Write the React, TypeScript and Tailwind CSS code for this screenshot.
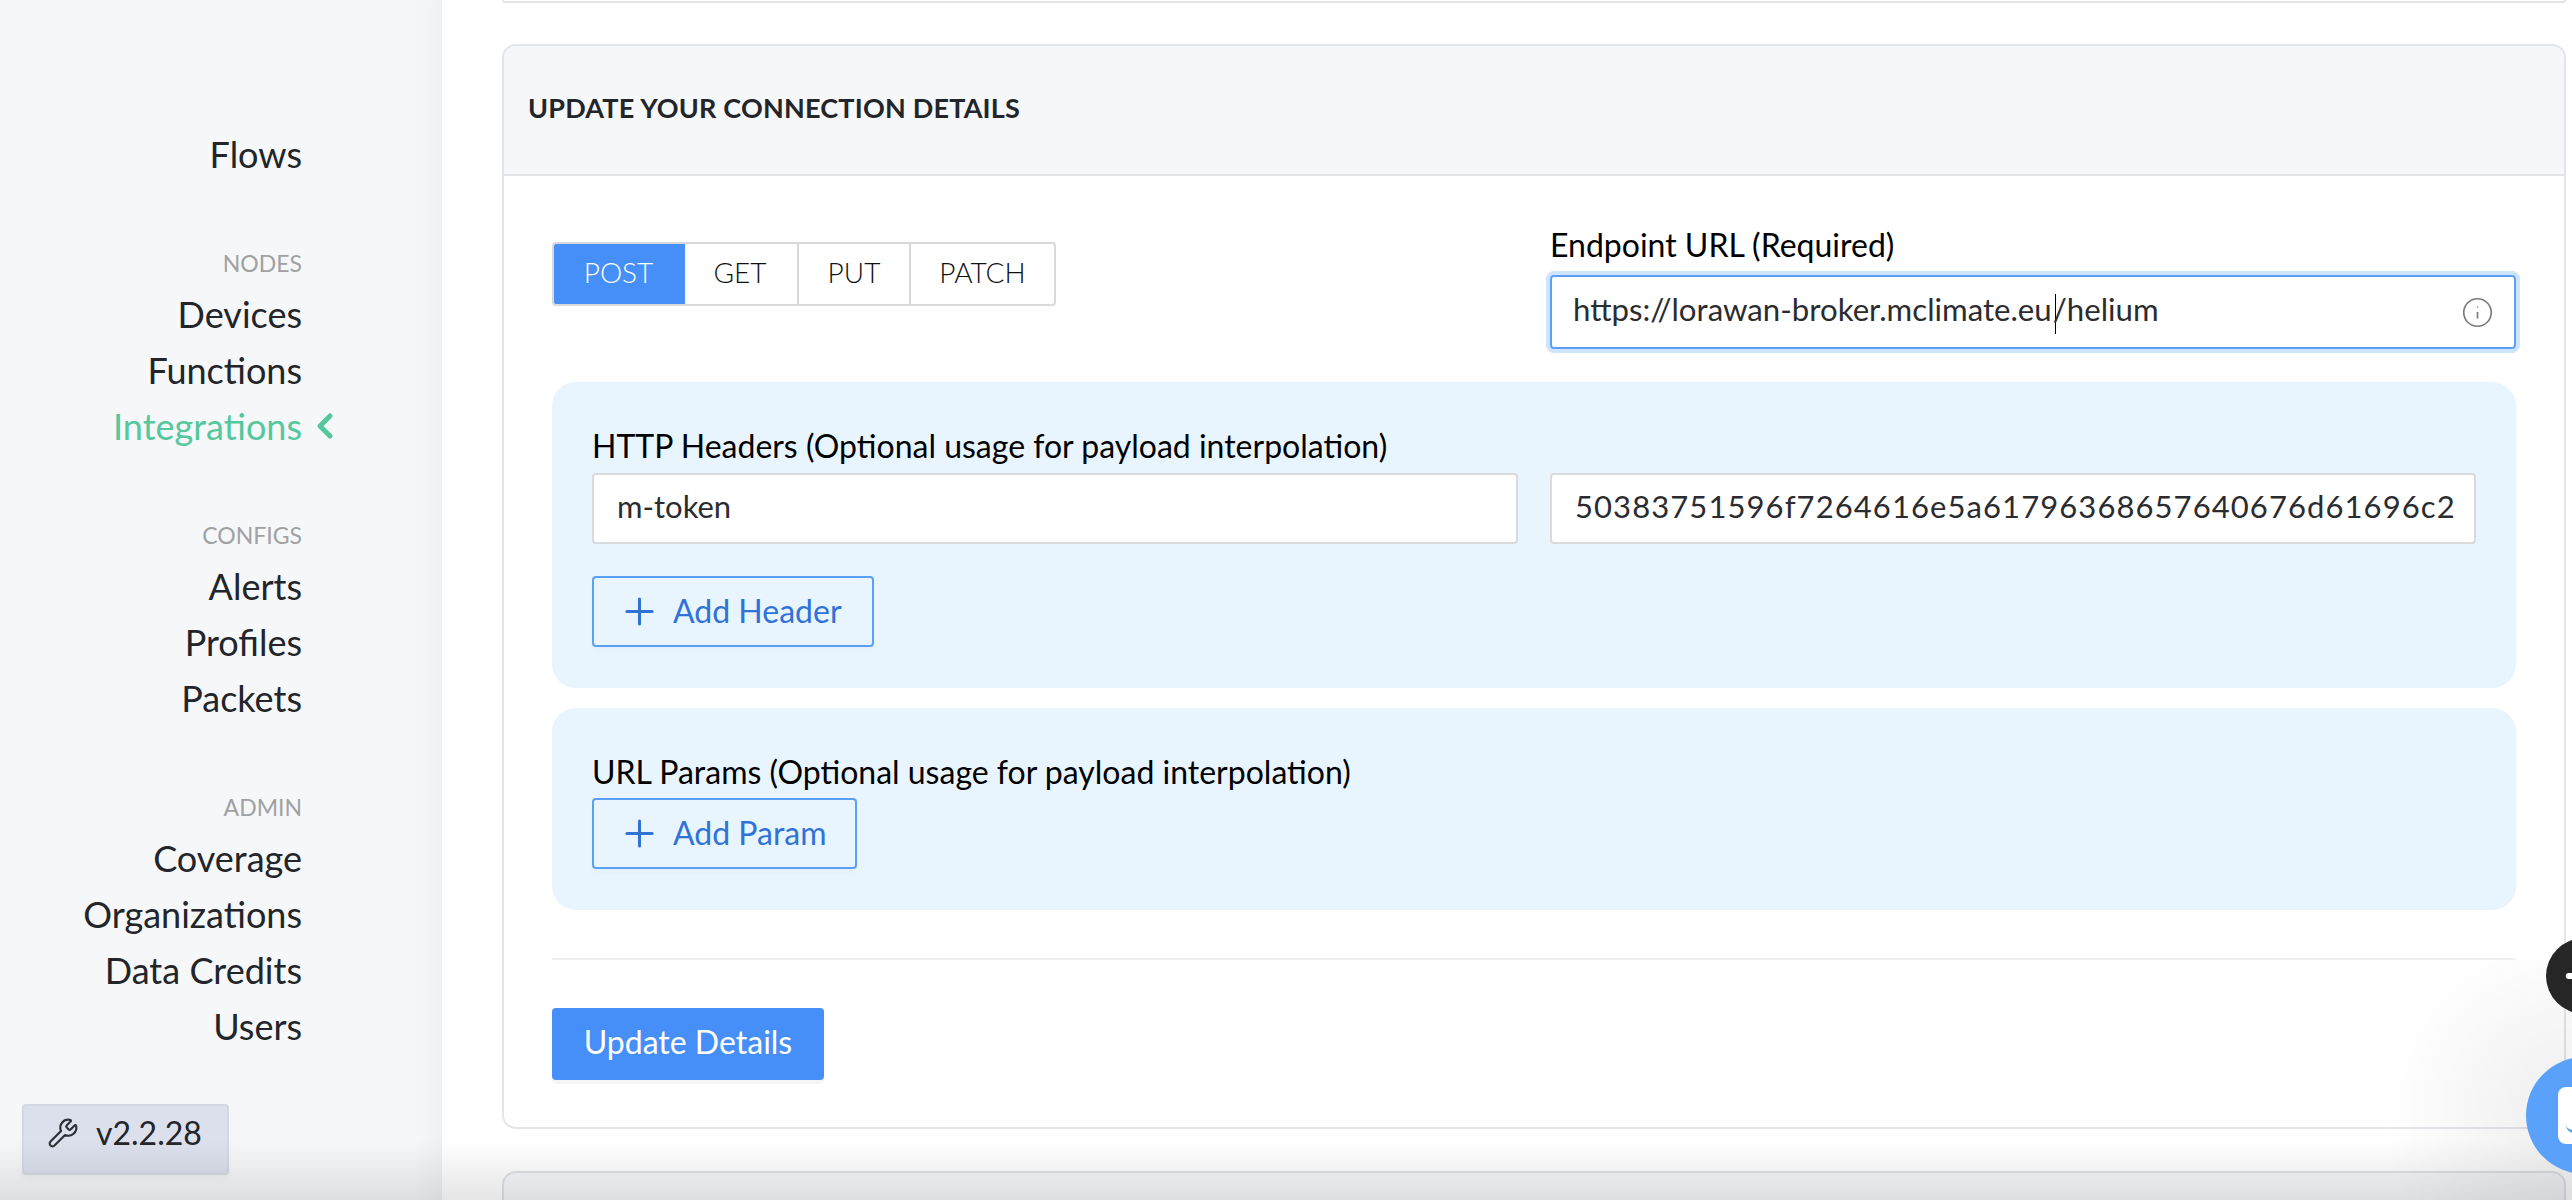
import React from "react";
import { ChevronLeft, Info, Plus, Wrench } from "lucide-react";

const font = "font-['Lato','Noto_Sans',sans-serif]";

const NavItem = ({ label, active }: { label: string; active?: boolean }) => (
  <div
    className={`relative h-[56px] leading-[56px] text-right text-[36px] ${
      active ? "text-[#55c79d]" : "text-[#22252a]"
    }`}
  >
    {label}
    {active && (
      <ChevronLeft
        size={40}
        strokeWidth={3}
        className="absolute left-[305px] top-[8px]"
      />
    )}
  </div>
);

const NavLabel = ({ label }: { label: string }) => (
  <div className="h-[46px] leading-[46px] text-right text-[23px] text-[#a0a1a3]">
    {label}
  </div>
);

const Sidebar = () => (
  <aside className="w-[442px] shrink-0 bg-[#f6f7f9] shadow-[inset_-34px_0_30px_-30px_rgba(0,0,0,0.05)] pt-[126px]">
    <div className="w-[302px] flex flex-col gap-[58px]">
      <div>
        <NavItem label="Flows" />
      </div>
      <div>
        <NavLabel label="NODES" />
        <NavItem label="Devices" />
        <NavItem label="Functions" />
        <NavItem label="Integrations" active />
      </div>
      <div>
        <NavLabel label="CONFIGS" />
        <NavItem label="Alerts" />
        <NavItem label="Profiles" />
        <NavItem label="Packets" />
      </div>
      <div>
        <NavLabel label="ADMIN" />
        <NavItem label="Coverage" />
        <NavItem label="Organizations" />
        <NavItem label="Data Credits" />
        <NavItem label="Users" />
      </div>
    </div>
    <div className="ml-[22px] mt-[50px] w-[207px] h-[71px] rounded-[4px] bg-[#dbe0ec] border-2 border-[#d3d8e2] flex items-start pl-[23px] pt-[7px] gap-[17px] shadow-[0_4px_6px_rgba(0,0,0,0.03)]">
      <Wrench size={32} strokeWidth={1.6} className="text-[#2b2f36] mt-[4px]" />
      <span className="text-[32px] leading-[40px] text-[#22252a]">v2.2.28</span>
    </div>
  </aside>
);

const methods = [
  { label: "POST", w: "w-[133px]", active: true },
  { label: "GET", w: "w-[114px]" },
  { label: "PUT", w: "w-[112px]" },
  { label: "PATCH", w: "w-[145px]" },
];

const MethodGroup = () => (
  <div className="flex h-[64px] rounded-[4px] overflow-hidden border-2 border-[#d9d9db] w-[504px]">
    {methods.map((m, i) => (
      <div
        key={m.label}
        className={`${m.w} flex items-center justify-center pb-[5px] text-[28px] font-light ${
          m.active
            ? "bg-[#468ff8] text-white -m-[2px] h-[64px]"
            : "text-[#0f1012]"
        } ${i > 1 ? "border-l-2 border-[#d9d9db]" : ""}`}
      >
        {m.label}
      </div>
    ))}
  </div>
);

const AddButton = ({ label, w }: { label: string; w: string }) => (
  <div
    className={`${w} h-[71px] rounded-[4px] border-2 border-[#5a9ff8] flex items-center pl-[24px] gap-[12px] text-[32px] text-[#2f72d8] shadow-[0_4px_4px_rgba(0,0,0,0.02)]`}
  >
    <Plus size={43} strokeWidth={1.7} />
    <span className="pb-[2px]">{label}</span>
  </div>
);

const TextBox = ({ value, spaced }: { value: string; spaced?: boolean }) => (
  <div
    className={`flex-1 min-w-0 h-[71px] bg-white rounded-[4px] border-2 border-[#d9dadc] pl-[23px] pr-[8px] pb-[5px] flex items-center text-[31px] text-[#2a2c30] overflow-hidden whitespace-nowrap ${
      spaced ? "tracking-[1.08px]" : ""
    }`}
  >
    {value}
  </div>
);

const ConnectionCard = () => (
  <section className="mt-[41px] rounded-[14px] border-2 border-[#e3e5ea] overflow-hidden bg-white">
    <header className="h-[130px] bg-[#f6f7f9] border-b-2 border-[#e3e5ea] flex items-center pl-[24px] pb-[3px]">
      <h2 className="text-[27px] tracking-[0.2px] font-bold text-[#22252a]">
        UPDATE YOUR CONNECTION DETAILS
      </h2>
    </header>
    <div className="px-[48px] pt-[66px] pb-[47px]">
      <div className="grid grid-cols-[998px_966px] h-[140px]">
        <MethodGroup />
        <div className="-mt-[14px]">
          <div className="h-[34px] leading-[34px] text-[32px] text-black">
            Endpoint URL (Required)
          </div>
          <div className="mt-[13px] h-[74px] rounded-[4px] border-2 border-[#5a9ff8] shadow-[0_0_0_4px_#cfe4fd] pl-[21px] pr-[20px] flex items-center justify-between text-[31.2px] text-[#2a2c30]">
            <span className="pb-[4px]">
              https://lorawan-broker.mclimate.eu
              <span className="inline-block w-0 h-[40px] align-middle border-l border-black ml-[3px] -mr-[3px]" />
              /helium
            </span>
            <Info size={33} strokeWidth={1.2} className="text-[#777a7e]" />
          </div>
        </div>
      </div>

      <div className="rounded-[24px] bg-[#e8f5fe] h-[306px] pl-[40px] pr-[40px] pt-[44px]">
        <div className="h-[40px] leading-[40px] text-[32px] text-black">
          HTTP Headers (Optional usage for payload interpolation)
        </div>
        <div className="mt-[7px] flex gap-[32px]">
          <TextBox value="m-token" />
          <TextBox value="50383751596f7264616e5a61796368657640676d61696c2" spaced />
        </div>
        <div className="mt-[32px]">
          <AddButton label="Add Header" w="w-[282px]" />
        </div>
      </div>

      <div className="mt-[20px] rounded-[24px] bg-[#e8f5fe] h-[202px] pl-[40px] pt-[44px]">
        <div className="h-[40px] leading-[40px] text-[32px] text-black">
          URL Params (Optional usage for payload interpolation)
        </div>
        <div className="mt-[6px]">
          <AddButton label="Add Param" w="w-[265px]" />
        </div>
      </div>

      <div className="mt-[48px] h-[2px] bg-[#f0f0f1]" />

      <button className="mt-[48px] block w-[272px] h-[72px] rounded-[4px] bg-[#468ff8] text-white text-[32px] pb-[4px] shadow-[0_4px_0_rgba(0,0,0,0.04)]">
        Update Details
      </button>
    </div>
  </section>
);

const App = () => {
  return (
    <div className={`relative flex h-[1200px] w-[2572px] overflow-hidden bg-white ${font}`}>
      <Sidebar />
      <main className="flex-1 pl-[60px] pr-[7px]">
        <div className="h-[3px] rounded-b-[14px] border-x-2 border-b-2 border-[#e3e5ea]" />
        <ConnectionCard />
        <div className="mt-[42px] h-[60px] rounded-t-[14px] border-2 border-[#e0e2e6] bg-[#f6f7f9]" />
      </main>

      {/* page shade along the bottom and round the chat launcher */}
      <div className="absolute inset-x-0 bottom-0 h-[60px] bg-gradient-to-b from-transparent to-black/10 pointer-events-none" />
      <div className="absolute right-0 bottom-0 w-[220px] h-[240px] bg-[radial-gradient(circle_at_100%_65%,rgba(0,0,0,0.07),transparent_70%)] pointer-events-none" />

      <div className="absolute left-[2546px] top-[938px] w-[76px] h-[76px] rounded-full bg-[#262626] flex items-center justify-center text-white">
        <Plus size={52} strokeWidth={2.8} />
      </div>
      <div className="absolute left-[2526px] top-[1057px] w-[117px] h-[117px] rounded-full bg-[#5aa1fb] flex items-center justify-center">
        <div className="relative w-[53px] h-[57px] rounded-[8px] bg-white">
          <div className="absolute left-[8px] top-[38px] w-[40px] h-[8px] border-b-[3px] border-[#5aa1fb] rounded-b-[20px]" />
        </div>
      </div>
    </div>
  );
};

export default App;
